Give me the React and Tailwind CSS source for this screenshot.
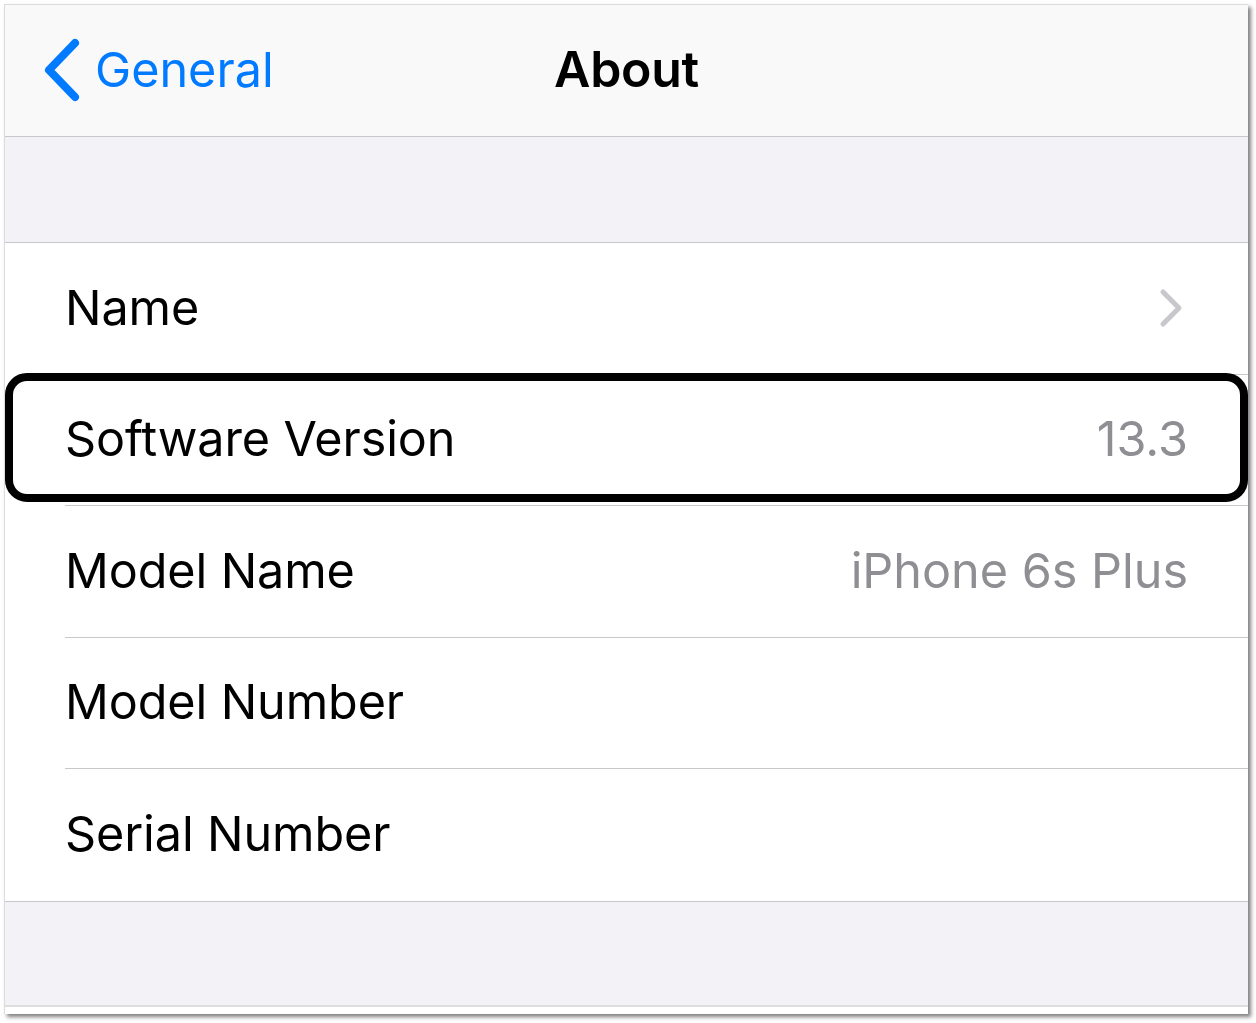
import React from 'react';

const rows = [
  { label: 'Name', chevron: true },
  { label: 'Software Version', value: '13.3' },
  { label: 'Model Name', value: 'iPhone 6s Plus' },
  { label: 'Model Number' },
  { label: 'Serial Number', last: true },
];

function Row({ label, value, chevron, last }) {
  return (
    <div className="h-[131.5px] flex items-stretch pl-[60px] bg-white">
      <div
        className={
          'flex-1 flex items-center justify-between pr-[60px] ' +
          (last ? '' : 'border-b border-[#c8c7cc]')
        }
      >
        <span className="text-[48.5px] text-black tracking-[-0.1px]">{label}</span>
        {value && <span className="text-[48.5px] text-[#8e8e93]">{value}</span>}
        {chevron && (
          <svg width="24" height="40" viewBox="0 0 24 40" className="mr-[5px]">
            <path d="M4 4 L20 20 L4 36" fill="none" stroke="#c7c7cc" strokeWidth="5" strokeLinecap="round" strokeLinejoin="round" />
          </svg>
        )}
      </div>
    </div>
  );
}

export default function App() {
  return (
    <div className="w-[1256px] h-[1023px] bg-white pt-[4px] pl-[4px]" style={{ fontFamily: 'Inter, "Noto Sans", sans-serif' }}>
      <div className="relative w-[1244px] h-[1010px] border-l border-t border-[#dcdcdc] bg-white shadow-[3px_3px_4px_rgba(0,0,0,0.5)] flex flex-col">
        {/* nav bar */}
        <div className="h-[132px] bg-[#f9f9f9] border-b border-[#c8c7cc] relative flex items-center justify-center shrink-0">
          <div className="absolute left-[38px] top-[29px] flex items-center">
            <svg width="40" height="64" viewBox="0 0 40 64">
              <path d="M32 5 L6 32 L32 59" fill="none" stroke="#007aff" strokeWidth="8" strokeLinecap="round" strokeLinejoin="round" />
            </svg>
            <span className="ml-[12px] text-[48.5px] text-[#007aff]">General</span>
          </div>
          <span className="text-[50px] font-semibold text-black tracking-[-0.3px] -mt-[2px]">About</span>
        </div>
        {/* spacer */}
        <div className="h-[106px] bg-[#f2f2f7] border-b border-[#c8c7cc] shrink-0" />
        {rows.map((r) => (
          <Row key={r.label} {...r} />
        ))}
        <div className="h-[106px] bg-[#f2f2f7] border-t border-[#c8c7cc] border-b-2 border-b-[#dedede] shrink-0" />
        <div className="flex-1 bg-white" />

        {/* highlight */}
        <div className="absolute left-0 right-0 top-[368px] h-[129px] border-[8px] border-black rounded-[22px] pointer-events-none" />
      </div>
    </div>
  );
}
